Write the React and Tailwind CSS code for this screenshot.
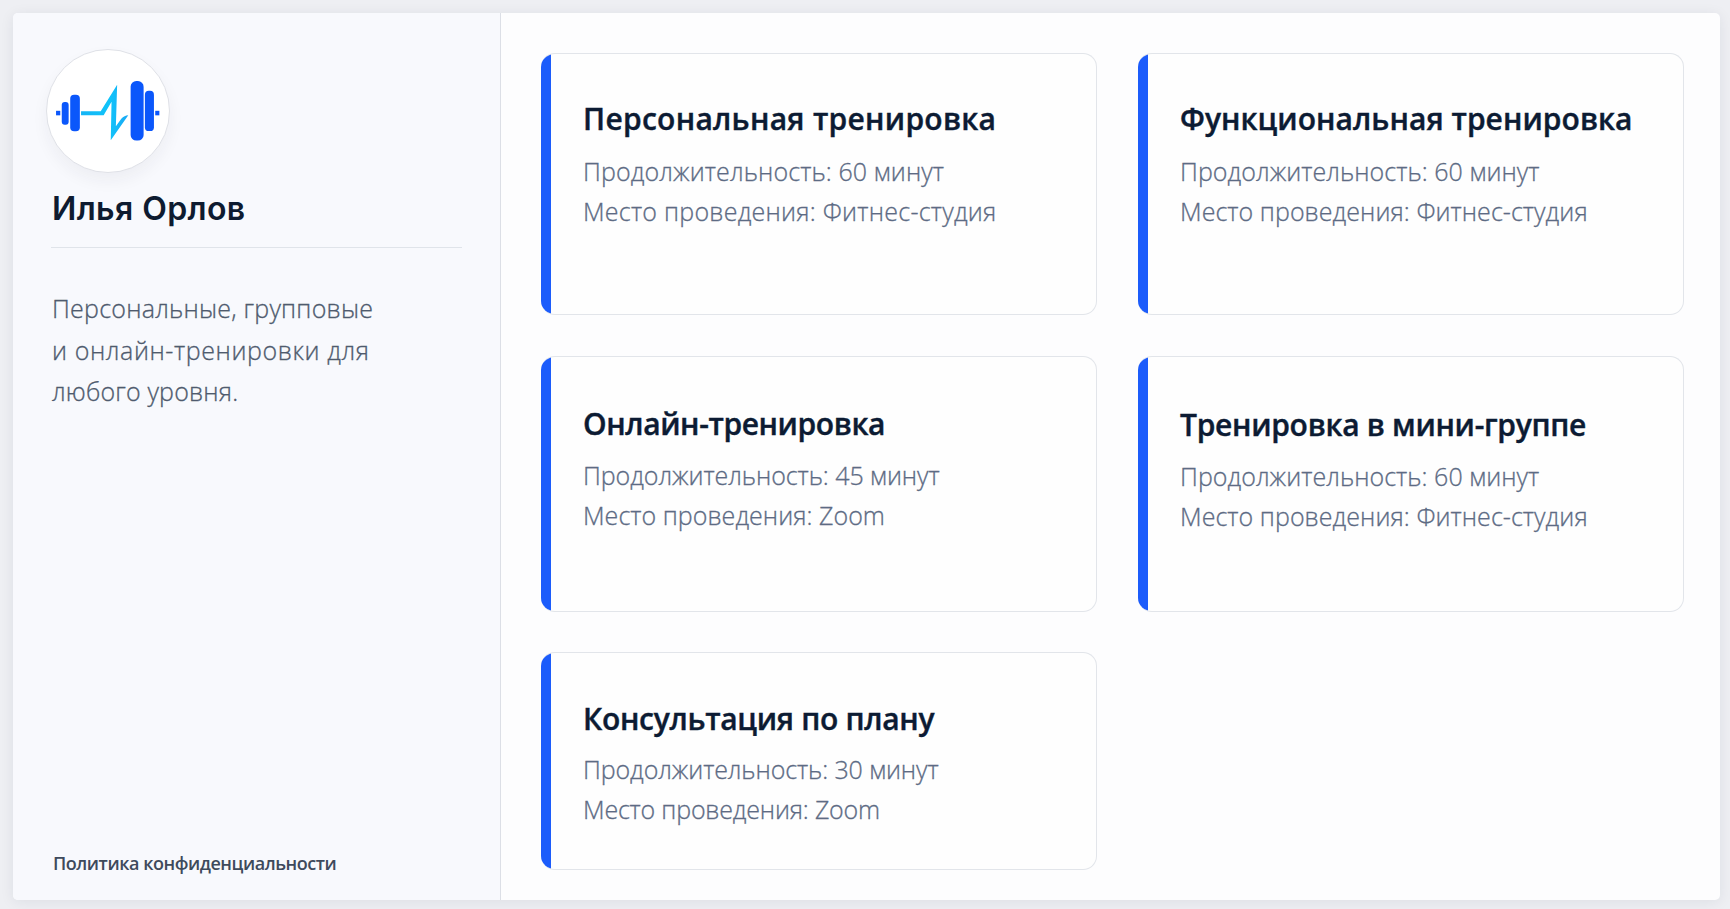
import React from 'react';
import clsx from 'clsx';

const services = [
  {
    id: 1,
    title: 'Персональная тренировка',
    duration: '60 минут',
    place: 'Фитнес-студия',
    padding: 'pt-[45px]',
    titleTracking: 'tracking-[0.28px]',
    durationTracking: 'tracking-[0.11px]',
    placeTracking: 'tracking-[0.25px]',
  },
  {
    id: 2,
    title: 'Функциональная тренировка',
    duration: '60 минут',
    place: 'Фитнес-студия',
    padding: 'pt-[45px]',
    titleTracking: 'tracking-[0.05px]',
    durationTracking: 'tracking-[0.05px]',
    placeTracking: 'tracking-[0.06px]',
  },
  {
    id: 3,
    title: 'Онлайн-тренировка',
    duration: '45 минут',
    place: 'Zoom',
    padding: 'pt-[47px]',
    titleTracking: 'tracking-[-0.39px]',
    durationTracking: 'tracking-[-0.06px]',
    placeTracking: 'tracking-[0.04px]',
  },
  {
    id: 4,
    title: 'Тренировка в мини-группе',
    duration: '60 минут',
    place: 'Фитнес-студия',
    padding: 'pt-12',
    titleTracking: 'tracking-[-0.29px]',
    durationTracking: 'tracking-[0.04px]',
    placeTracking: 'tracking-[0.06px]',
  },
  {
    id: 5,
    title: 'Консультация по плану',
    duration: '30 минут',
    place: 'Zoom',
    padding: 'pt-[46px]',
    titleTracking: 'tracking-[-0.3px]',
    durationTracking: 'tracking-[-0.1px]',
    placeTracking: 'tracking-[-0.19px]',
    compact: true,
  },
];

const Logo = () => (
  <svg viewBox="0 0 124 124" className="size-full">
    <defs>
      <linearGradient id="pulse" x1="0" y1="0" x2="1" y2="0">
        <stop offset="0" stopColor="#14b4f5" />
        <stop offset="0.6" stopColor="#10c4fa" />
        <stop offset="1" stopColor="#1aa8f5" />
      </linearGradient>
    </defs>
    <g fill="#0b57fb">
      <rect x="9.2" y="61.8" width="4.3" height="4.6" />
      <rect x="15" y="52.9" width="7" height="23" rx="3" />
      <rect x="23.6" y="45.6" width="9.8" height="37" rx="4" />
      <rect x="85" y="31.6" width="13.2" height="60.5" rx="5.8" />
      <rect x="99.5" y="41.4" width="9.2" height="41" rx="4" />
      <rect x="110" y="61.8" width="4.2" height="4.6" />
    </g>
    <path
      d="M34.6 62.2H54.6L71.3 35.3L70 77.6L75.5 70Q78.6 66.2 82.6 66.2L64.8 91.8L65.6 52.6L57.6 66.3H34.6Z"
      fill="url(#pulse)"
    />
  </svg>
);

const Sidebar = () => (
  <aside className="flex w-[488px] shrink-0 flex-col border-r border-[#dcdfe6] bg-[#f8f9fd] pt-9 pr-[38px] pb-[21px] pl-[33px]">
    <div className="size-[124px] shrink-0 rounded-full border border-[#dfe1e7] bg-white shadow-[0_8px_16px_rgba(30,41,59,0.05)]">
      <Logo />
    </div>
    <div className="ml-[5px]">
      <h1 className="mt-4 border-b border-[#e0e4ea] pb-[18px] pl-px font-['Inter'] text-[32px] leading-10 font-semibold tracking-[0.4px] text-[#0e1b30]">
        Илья Орлов
      </h1>
      <p className="mt-10 pl-px text-[25px] leading-[41.7px] font-light text-[#4f5b6e] [-webkit-text-stroke:0.3px]">
        <span className="block tracking-[0.23px]">Персональные, групповые</span>
        <span className="block tracking-[0.6px]">и онлайн-тренировки для</span>
        <span className="block tracking-[0.17px]">любого уровня.</span>
      </p>
    </div>
    <a href="#" className="mt-auto ml-[7px] text-[18px] leading-8 font-semibold tracking-[-0.45px] text-[#3e4a5c]">
      Политика конфиденциальности
    </a>
  </aside>
);

const ServiceCard = ({ service }) => (
  <article className="flex overflow-hidden rounded-[14px] border border-l-0 border-[#e2e5ea] bg-[#fefefe]">
    <div className="w-2.5 shrink-0 bg-[#1c5cfb]" />
    <div className={clsx('pl-8 whitespace-nowrap', service.padding)}>
      <h2 className={clsx('text-[30px] leading-10 font-semibold text-[#0c1b33] [-webkit-text-stroke:0.4px]', service.titleTracking)}>
        {service.title}
      </h2>
      <div
        className={clsx(
          'text-[25px] font-light text-[#5d6b84] [-webkit-text-stroke:0.3px]',
          service.compact ? 'mt-[11px] leading-[39.5px]' : 'mt-[11.5px] leading-10',
        )}
      >
        <p className={service.durationTracking}>Продолжительность: {service.duration}</p>
        <p className={service.placeTracking}>Место проведения: {service.place}</p>
      </div>
    </div>
  </article>
);

const App = () => (
  <div className="h-[909px] bg-[#eeeff3] pt-[13px] pr-2.5 pb-[9px] pl-[13px] font-['Open_Sans',sans-serif]">
    <div className="flex h-full overflow-hidden rounded-[5px] bg-[#fdfdfe] shadow-[0_2px_14px_rgba(30,41,59,0.08)]">
      <Sidebar />
      <main className="grid flex-1 grid-cols-[556px_546px] grid-rows-[262px_256px_218px] gap-x-[41px] gap-y-[40.5px] pt-10 pl-10">
        {services.map(service => (
          <ServiceCard key={service.id} service={service} />
        ))}
      </main>
    </div>
  </div>
);

export default App;
